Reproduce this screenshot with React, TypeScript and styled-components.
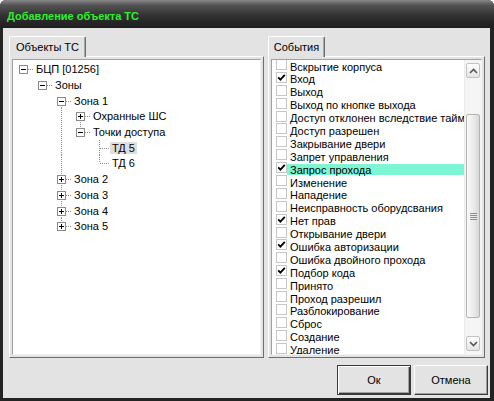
import React from 'react';
import styled, { createGlobalStyle } from 'styled-components';

const GlobalStyle = createGlobalStyle`
  html, body { margin: 0; padding: 0; background: #fff; }
  body {
    font-family: "Liberation Sans", Arial, sans-serif;
    font-size: 11px;
    color: #000;
  }
  * { box-sizing: border-box; }
`;

type TreeNode = {
  label: string;
  level: number;
  expander?: '+' | '-';
  pipes: boolean[];
  up?: boolean;
  down?: boolean;
  selected?: boolean;
};

const tree: TreeNode[] = [
  { label: 'БЦП [01256]', level: 0, expander: '-', pipes: [] },
  { label: 'Зоны', level: 1, expander: '-', pipes: [false] },
  { label: 'Зона 1', level: 2, expander: '-', pipes: [false, false], down: true },
  { label: 'Охранные ШС', level: 3, expander: '+', pipes: [false, false, true], down: true },
  { label: 'Точки доступа', level: 3, expander: '-', pipes: [false, false, true], up: true },
  { label: 'ТД 5', level: 4, pipes: [false, false, true, false], up: true, down: true, selected: true },
  { label: 'ТД 6', level: 4, pipes: [false, false, true, false], up: true },
  { label: 'Зона 2', level: 2, expander: '+', pipes: [false, false], up: true, down: true },
  { label: 'Зона 3', level: 2, expander: '+', pipes: [false, false], up: true, down: true },
  { label: 'Зона 4', level: 2, expander: '+', pipes: [false, false], up: true, down: true },
  { label: 'Зона 5', level: 2, expander: '+', pipes: [false, false], up: true },
];

const events: { label: string; checked?: boolean; active?: boolean }[] = [
  { label: 'Вскрытие корпуса' },
  { label: 'Вход', checked: true },
  { label: 'Выход' },
  { label: 'Выход по кнопке выхода' },
  { label: 'Доступ отклонен вследствие таймаута' },
  { label: 'Доступ разрешен' },
  { label: 'Закрывание двери' },
  { label: 'Запрет управления' },
  { label: 'Запрос прохода', checked: true, active: true },
  { label: 'Изменение' },
  { label: 'Нападение' },
  { label: 'Неисправность оборудсвания' },
  { label: 'Нет прав', checked: true },
  { label: 'Открывание двери' },
  { label: 'Ошибка авторизации', checked: true },
  { label: 'Ошибка двойного прохода' },
  { label: 'Подбор кода', checked: true },
  { label: 'Принято' },
  { label: 'Проход разрешил' },
  { label: 'Разблокирование' },
  { label: 'Сброс' },
  { label: 'Создание' },
  { label: 'Удаление' },
];

const DOT = '#8c8c8c';

const Guide = ({ pipe, own, up, down, expander }: {
  pipe?: boolean; own?: boolean; up?: boolean; down?: boolean; expander?: '+' | '-';
}) => (
  <GuideCell>
    <svg width="19" height="16" viewBox="0 0 19 16" shapeRendering="crispEdges">
      {pipe && <line x1="9.5" y1="0" x2="9.5" y2="16" stroke={DOT} strokeDasharray="1 1" />}
      {own && up && <line x1="9.5" y1="0" x2="9.5" y2="8" stroke={DOT} strokeDasharray="1 1" />}
      {own && down && <line x1="9.5" y1="8" x2="9.5" y2="16" stroke={DOT} strokeDasharray="1 1" />}
      {own && <line x1="10" y1="8.5" x2="19" y2="8.5" stroke={DOT} strokeDasharray="1 1" />}
      {expander && (
        <>
          <rect x="5.5" y="4.5" width="8" height="8" fill="#fff" stroke="#8a8a8a" />
          <rect x="7" y="8" width="5" height="1" fill="#000" />
          {expander === '+' && <rect x="9" y="6" width="1" height="5" fill="#000" />}
        </>
      )}
    </svg>
  </GuideCell>
);

const Check = () => (
  <svg width="9" height="9" viewBox="0 0 9 9">
    <path d="M1.2 4.3 L3.4 6.6 L7.8 1.8" fill="none" stroke="#000" strokeWidth="1.8" />
  </svg>
);

const Chevron = ({ dir }: { dir: 'up' | 'down' }) => (
  <svg width="9" height="6" viewBox="0 0 9 6">
    <path
      d={dir === 'up' ? 'M1 5 L4.5 1.5 L8 5' : 'M1 1 L4.5 4.5 L8 1'}
      fill="none"
      stroke="#555"
      strokeWidth="1.6"
    />
  </svg>
);

export default function App() {
  return (
    <>
      <GlobalStyle />
      <Window>
        <TitleBar>Добавление объекта ТС</TitleBar>
        <Body>
          <PanelsRow>
            <Group $width={255}>
              <TabStrip>
                <Tab $width={77}>Объекты ТС</Tab>
              </TabStrip>
              <Page>
                <TreeBox>
                  {tree.map((n) => (
                    <TreeRow key={n.label}>
                      {n.pipes.map((p, i) => (
                        <Guide key={i} pipe={p} />
                      ))}
                      <Guide own up={n.up} down={n.down} expander={n.expander} />
                      <TreeLabel $selected={n.selected}>{n.label}</TreeLabel>
                    </TreeRow>
                  ))}
                </TreeBox>
              </Page>
            </Group>
            <Group>
              <TabStrip>
                <Tab $width={57}>События</Tab>
              </TabStrip>
              <Page>
                <ListBox>
                  <ListView>
                    <ListInner>
                      {events.map((e) => (
                        <EventRow key={e.label}>
                          <CheckBox>{e.checked && <Check />}</CheckBox>
                          <EventLabel $active={e.active}>{e.label}</EventLabel>
                        </EventRow>
                      ))}
                    </ListInner>
                  </ListView>
                  <ScrollBar>
                    <ScrollButton><Chevron dir="up" /></ScrollButton>
                    <Track>
                      <Thumb style={{ marginTop: 36, height: 204 }}>
                        <Grip />
                      </Thumb>
                    </Track>
                    <ScrollButton><Chevron dir="down" /></ScrollButton>
                  </ScrollBar>
                </ListBox>
              </Page>
            </Group>
          </PanelsRow>
          <ButtonRow>
            <DialogButton $default>Ок</DialogButton>
            <DialogButton>Отмена</DialogButton>
          </ButtonRow>
        </Body>
      </Window>
    </>
  );
}

const Window = styled.div`
  width: 494px;
  height: 401px;
  background: #232323;
  border-radius: 6px 6px 0 0;
  display: flex;
  flex-direction: column;
  overflow: hidden;
`;

const TitleBar = styled.div`
  flex: none;
  height: 28px;
  padding: 3px 0 0 7px;
  display: flex;
  align-items: center;
  background: linear-gradient(#8a8a8a 0px, #555 5px, #363636 14px, #262626 22px, #1e1e1e 28px);
  color: #2ef02e;
  font-weight: bold;
  font-size: 11px;
`;

const Body = styled.div`
  flex: 1;
  margin: 0 4px 3px 3px;
  background: #e3e3e3;
  display: flex;
  flex-direction: column;
  padding: 8px 2px 0 6px;
`;

const PanelsRow = styled.div`
  height: 322px;
  display: flex;
  gap: 4px;
  padding-right: 3px;
`;

const Group = styled.div<{ $width?: number }>`
  display: flex;
  flex-direction: column;
  ${(p) => (p.$width ? `width: ${p.$width}px; flex: none;` : 'flex: 1; min-width: 0;')}
`;

const TabStrip = styled.div`
  height: 20px;
  display: flex;
  align-items: flex-start;
`;

const Tab = styled.div<{ $width: number }>`
  position: relative;
  z-index: 1;
  width: ${(p) => p.$width}px;
  height: 21px;
  background: #e3e3e3;
  border-top: 1px solid #fff;
  border-left: 1px solid #fff;
  border-right: 1px solid #6e6e6e;
  box-shadow: inset -1px 0 #a8a8a8;
  border-radius: 2px 2px 0 0;
  display: flex;
  align-items: center;
  justify-content: center;
  padding-bottom: 1px;
`;

const Page = styled.div`
  flex: 1;
  display: flex;
  border: 1px solid;
  border-color: #fff #6e6e6e #6e6e6e #fff;
  padding: 2px;
`;

const TreeBox = styled.div`
  flex: 1;
  background: #fff;
  border: 1px solid;
  border-color: #a0a0a0 #f4f4f4 #f4f4f4 #a0a0a0;
  padding: 1.5px 0 0 1px;
  overflow: hidden;
`;

const TreeRow = styled.div`
  height: 15.7px;
  display: flex;
  align-items: center;
  white-space: nowrap;
`;

const GuideCell = styled.span`
  flex: none;
  width: 19px;
  height: 15.7px;
  display: flex;
  align-items: center;
  overflow: visible;
`;

const TreeLabel = styled.span<{ $selected?: boolean }>`
  margin-left: 1px;
  padding: 0 2px;
  line-height: 12px;
  height: 12px;
  background: ${(p) => (p.$selected ? '#dedede' : 'transparent')};
`;

const ListBox = styled.div`
  flex: 1;
  display: flex;
  background: #fff;
  border: 1px solid;
  border-color: #a0a0a0 #f4f4f4 #f4f4f4 #a0a0a0;
  overflow: hidden;
`;

const ListView = styled.div`
  flex: 1;
  min-width: 0;
  overflow: hidden;
`;

const ListInner = styled.div`
  margin-top: -2px;
`;

const EventRow = styled.div`
  height: 12.9px;
  display: flex;
  align-items: flex-start;
  padding-left: 4px;
  white-space: nowrap;
`;

const CheckBox = styled.span`
  flex: none;
  width: 11px;
  height: 11px;
  margin-top: 1px;
  border: 1px solid #c6c6c6;
  background: #fff;
  display: flex;
  align-items: center;
  justify-content: center;
`;

const EventLabel = styled.span<{ $active?: boolean }>`
  flex: 1;
  margin-top: 2.5px;
  height: 11px;
  line-height: 13px;
  padding-left: 3px;
  background: ${(p) => (p.$active ? '#7ff6d3' : 'transparent')};
`;

const ScrollBar = styled.div`
  flex: none;
  width: 17px;
  display: flex;
  flex-direction: column;
  padding: 3px 1px 3px 1px;
  background: #f5f5f5;
  border-left: 1px solid #ebebeb;
`;

const ScrollButton = styled.div`
  flex: none;
  height: 15px;
  border: 1px solid #c2c2c2;
  border-radius: 2px;
  background: linear-gradient(#ffffff, #e4e4e4);
  display: flex;
  align-items: center;
  justify-content: center;
`;

const Track = styled.div`
  flex: 1;
  display: flex;
  flex-direction: column;
`;

const Thumb = styled.div`
  flex: none;
  border: 1px solid #b4b4b4;
  border-radius: 2px;
  background: linear-gradient(90deg, #fafafa, #e9e9e9 60%, #d8d8d8);
  display: flex;
  align-items: center;
  justify-content: center;
`;

const Grip = styled.span`
  width: 7px;
  height: 7px;
  background: repeating-linear-gradient(#8e8e8e 0 1px, transparent 1px 2px);
`;

const ButtonRow = styled.div`
  margin-top: 7px;
  display: flex;
  justify-content: flex-end;
  gap: 3px;
`;

const DialogButton = styled.button<{ $default?: boolean }>`
  width: 74px;
  height: 30px;
  padding: 0;
  font-family: "Liberation Sans", Arial, sans-serif;
  font-size: 11px;
  color: #000;
  background: #e3e3e3;
  border: 1px solid;
  border-color: ${(p) => (p.$default ? '#3a3a3a' : '#fff #3a3a3a #3a3a3a #fff')};
  box-shadow: ${(p) =>
    p.$default
      ? 'inset 1px 1px #fff, inset -1px -1px #3a3a3a, inset -2px -2px #a0a0a0'
      : 'inset -1px -1px #a0a0a0'};
`;
